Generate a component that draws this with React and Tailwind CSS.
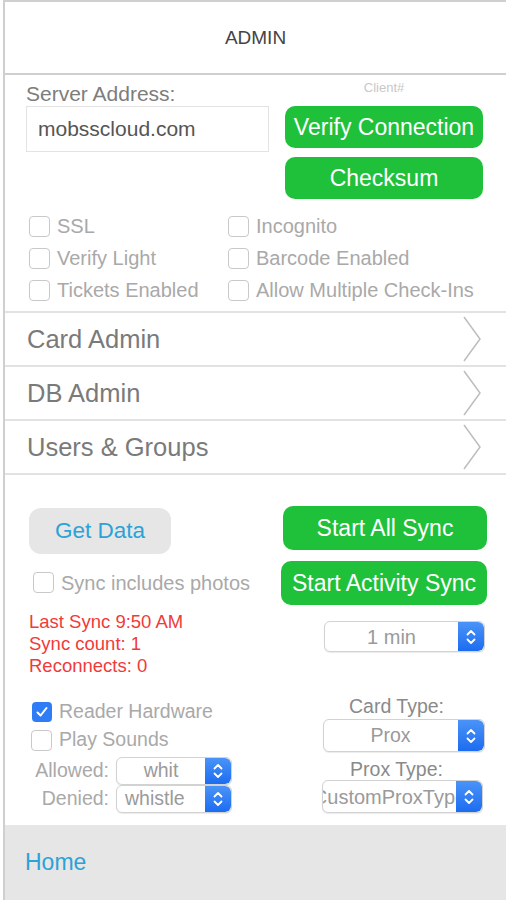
import React from 'react';

const font = { fontFamily: '"Liberation Sans", Arial, sans-serif' };

const Check = ({ checked }) =>
  checked ? (
    <div className="w-[20px] h-[20px] rounded-[4px] bg-[#2f7df6] flex items-center justify-center shrink-0">
      <svg width="14" height="14" viewBox="0 0 14 14">
        <path d="M2.5 7.5 L5.6 10.5 L11.5 3" fill="none" stroke="white" strokeWidth="2" strokeLinecap="round" strokeLinejoin="round" />
      </svg>
    </div>
  ) : (
    <div className="w-[21px] h-[21px] rounded-[4px] border-[1.5px] border-[#c9c9c9] bg-white shrink-0" />
  );

const CheckRow = ({ label, checked, className = '', textClass = 'text-[20px]' }) => (
  <div className={`flex items-center gap-[7px] ${className}`}>
    <Check checked={checked} />
    <span className={`text-[#a9a9a9] leading-none whitespace-nowrap ${textClass}`}>{label}</span>
  </div>
);

const Stepper = () => (
  <div className="w-[26px] self-stretch rounded-r-[6px] bg-gradient-to-b from-[#4a93f8] to-[#1b6cf0] flex items-center justify-center shrink-0">
    <svg width="12" height="18" viewBox="0 0 12 18">
      <path d="M2.5 6.5 L6 3 L9.5 6.5 M2.5 11.5 L6 15 L9.5 11.5" fill="none" stroke="white" strokeWidth="1.8" strokeLinecap="round" strokeLinejoin="round" />
    </svg>
  </div>
);

const Select = ({ value, className = '', textClass = 'justify-center' }) => (
  <div className={`flex border border-[#d2d2d2] rounded-[6px] bg-white overflow-hidden shadow-[0_1px_1px_rgba(0,0,0,0.08)] ${className}`}>
    <div className={`flex-1 min-w-0 flex items-center overflow-hidden whitespace-nowrap text-[#9a9a9a] ${textClass}`}>{value}</div>
    <Stepper />
  </div>
);

const GreenButton = ({ children, className = '' }) => (
  <div className={`bg-[#20c13a] rounded-[10px] text-white text-[23px] flex items-center justify-center whitespace-nowrap ${className}`}>
    {children}
  </div>
);

const NavRow = ({ label }) => (
  <div className="h-[54px] border-t-2 border-[#e2e2e2] flex items-center justify-between pl-[22px] pr-[24px]">
    <span className="text-[25.5px] text-[#7a7a7a]">{label}</span>
    <svg width="20" height="46" viewBox="0 0 20 46">
      <path d="M2 1 L18 23 L2 45" fill="none" stroke="#bdbdbd" strokeWidth="1.5" />
    </svg>
  </div>
);

export default function App() {
  return (
    <div className="w-[506px] h-[900px] bg-white pl-[3px] overflow-hidden" style={font}>
      <div className="h-full border-l-2 border-[#cfcfcf] flex flex-col">
        <div className="h-[75px] border-t-2 border-b-2 border-[#cfcfcf] flex items-center justify-center">
          <span className="text-[19px] text-[#444] mt-[2px]">ADMIN</span>
        </div>

        <div className="pl-[21px]">
          <div className="flex items-start">
            <div className="w-[243px] mt-[8px] text-[21px] leading-[22px] text-[#7d7d7d]">Server Address:</div>
            <div className="w-[198px] ml-[16px] mt-[6px] text-center text-[13px] leading-[14px] text-[#c8c8c8]">Client#</div>
          </div>
          <div className="flex items-start mt-[1px]">
            <div className="w-[243px] h-[46px] border border-[#e3e3e3] flex items-center pl-[11px] text-[21px] text-[#555]">
              mobsscloud.com
            </div>
            <div className="ml-[16px] w-[198px] flex flex-col gap-[9px]">
              <GreenButton className="h-[42px]">Verify Connection</GreenButton>
              <GreenButton className="h-[42px]">Checksum</GreenButton>
            </div>
          </div>
        </div>

        <div className="pl-[24px] mt-[11px] mb-[5px] grid grid-cols-[199px_1fr]">
          <CheckRow label="SSL" className="h-[32px]" />
          <CheckRow label="Incognito" className="h-[32px]" />
          <CheckRow label="Verify Light" className="h-[32px]" />
          <CheckRow label="Barcode Enabled" className="h-[32px]" />
          <CheckRow label="Tickets Enabled" className="h-[32px]" />
          <CheckRow label="Allow Multiple Check-Ins" className="h-[32px]" />
        </div>

        <NavRow label="Card Admin" />
        <NavRow label="DB Admin" />
        <NavRow label="Users & Groups" />
        <div className="border-t-2 border-[#e2e2e2]" />

        <div className="flex justify-between pl-[24px] pr-[19px] mt-[31px]">
          <div className="flex flex-col">
            <div className="w-[142px] h-[46px] mt-[2px] rounded-[12px] bg-[#e6e6e6] flex items-center justify-center text-[22.5px] text-[#2ba2d8]">
              Get Data
            </div>
            <CheckRow label="Sync includes photos" className="mt-[18px] pl-[4px]" />
            <div className="mt-[18px] text-[18.5px] leading-[22px] text-[#f23a3a]">
              <div>Last Sync 9:50 AM</div>
              <div>Sync count: 1</div>
              <div>Reconnects: 0</div>
            </div>
          </div>
          <div className="w-[206px] flex flex-col items-end">
            <GreenButton className="w-[204px] h-[44px] text-[23.5px]">Start All Sync</GreenButton>
            <GreenButton className="w-[206px] h-[44px] mt-[11px] text-[23.5px]">Start Activity Sync</GreenButton>
            <Select value="1 min" className="w-[161px] h-[31px] mt-[16px] mr-[2px] text-[20px]" />
          </div>
        </div>

        <div className="flex justify-between pl-[26px] pr-[21px] mt-[21px]">
          <div className="flex flex-col">
            <CheckRow label="Reader Hardware" checked className="h-[28px] pl-[1px]" textClass="text-[19.5px]" />
            <CheckRow label="Play Sounds" className="h-[28px]" textClass="text-[19.5px]" />
            <div className="flex items-center mt-[3px] h-[28px]">
              <span className="w-[85px] pr-[7px] text-right text-[19.5px] text-[#a9a9a9]">Allowed:</span>
              <Select value="whit" className="w-[116px] h-[28px] text-[19.5px]" />
            </div>
            <div className="flex items-center h-[28px]">
              <span className="w-[85px] pr-[7px] text-right text-[19.5px] text-[#a9a9a9]">Denied:</span>
              <Select value="whistle" className="w-[116px] h-[28px] text-[19.5px]" textClass="justify-start pl-[8px]" />
            </div>
          </div>
          <div className="w-[163px] flex flex-col items-center">
            <div className="text-[19.5px] text-[#8a8a8a] leading-[22px] -mt-[3px] pr-[14px]">Card Type:</div>
            <Select value="Prox" className="w-[162px] h-[33px] mt-[2px] text-[19.5px]" />
            <div className="text-[19.5px] text-[#8a8a8a] leading-[22px] mt-[6px] pr-[14px]">Prox Type:</div>
            <Select value="CustomProxType" className="w-[161px] h-[33px] mr-[2px] text-[20px]" textClass="justify-center" />
          </div>
        </div>

        <div className="mt-auto h-[75px] bg-[#e6e6e6] flex items-center pl-[20px]">
          <span className="text-[23px] text-[#2ba2d8]">Home</span>
        </div>
      </div>
    </div>
  );
}
